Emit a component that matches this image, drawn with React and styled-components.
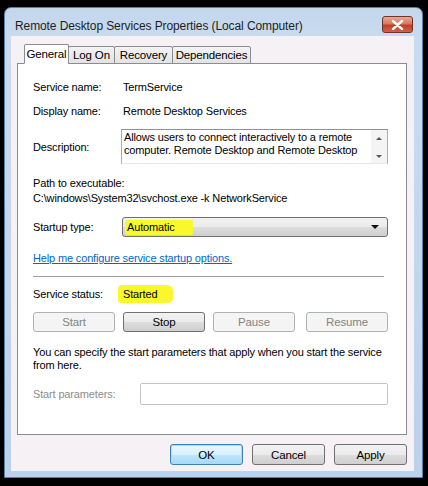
import React from 'react';
import styled, { createGlobalStyle } from 'styled-components';

const GlobalStyle = createGlobalStyle`
  html, body {
    margin: 0;
    padding: 0;
    background: #000;
  }
  body {
    font-family: "Liberation Sans", Arial, sans-serif;
    font-size: 11px;
    letter-spacing: -0.15px;
    color: #000;
  }
`;

const App = () => {
  return (
    <>
      <GlobalStyle />
      <Screen>
        <Window>
          <TitleBar>
            <Title>Remote Desktop Services Properties (Local Computer)</Title>
            <CloseButton>
              <svg width="13" height="10" viewBox="0 0 13 10">
                <path d="M2 1 L11 9 M11 1 L2 9" stroke="#fff" strokeWidth="2.4" strokeLinecap="round" />
              </svg>
            </CloseButton>
          </TitleBar>
          <Client>
            <Tabs>
              <Tab active w={45}>General</Tab>
              <Tab w={47}>Log On</Tab>
              <Tab w={59}>Recovery</Tab>
              <Tab w={79}>Dependencies</Tab>
            </Tabs>
            <Panel>
              <Row top={16}>
                <Label>Service name:</Label>
                <Value>TermService</Value>
              </Row>
              <Row top={10}>
                <Label>Display name:</Label>
                <Value>Remote Desktop Services</Value>
              </Row>
              <DescRow>
                <Label>Description:</Label>
                <DescBox>
                  <DescText>
                    Allows users to connect interactively to a remote computer. Remote Desktop and Remote Desktop
                  </DescText>
                  <ScrollBar>
                    <Arrow up />
                    <Arrow />
                  </ScrollBar>
                </DescBox>
              </DescRow>
              <Block top={13}>Path to executable:</Block>
              <Block top={3}>C:\windows\System32\svchost.exe -k NetworkService</Block>
              <Row top={13}>
                <Label>Startup type:</Label>
                <Select>
                  <Highlight>Automatic</Highlight>
                  <DropArrow />
                </Select>
              </Row>
              <Link href="#">Help me configure service startup options.</Link>
              <Separator />
              <Row top={8}>
                <Label shift={-5}>Service status:</Label>
                <StatusMark>Started</StatusMark>
              </Row>
              <ButtonRow>
                <Button disabled>Start</Button>
                <Button>Stop</Button>
                <Button disabled>Pause</Button>
                <Button disabled>Resume</Button>
              </ButtonRow>
              <Note>
                You can specify the start parameters that apply when you start the service from here.
              </Note>
              <ParamRow>
                <ParamLabel>Start parameters:</ParamLabel>
                <ParamInput />
              </ParamRow>
            </Panel>
            <Footer>
              <DialogButton primary>OK</DialogButton>
              <DialogButton>Cancel</DialogButton>
              <DialogButton>Apply</DialogButton>
            </Footer>
          </Client>
        </Window>
      </Screen>
    </>
  );
};

export default App;

const Screen = styled.div`
  width: 428px;
  height: 486px;
  padding: 7px 5px 8px 4px;
  box-sizing: border-box;
`;

const Window = styled.div`
  width: 419px;
  height: 471px;
  box-sizing: border-box;
  border: 1px solid #5b7fa6;
  border-radius: 7px 7px 0 0;
  background: linear-gradient(180deg, #c3d6ec 0%, #c9dbee 30px, #bcd2ea 100%);
  padding: 0 8px 6px 6px;
  display: flex;
  flex-direction: column;
`;

const TitleBar = styled.div`
  height: 28px;
  display: flex;
  align-items: flex-start;
  justify-content: space-between;
  padding: 0 1px 0 4px;
`;

const Title = styled.div`
  font-size: 12px;
  letter-spacing: -0.1px;
  color: #1e1e1e;
  margin-top: 11px;
`;

const CloseButton = styled.div`
  width: 31px;
  height: 17px;
  margin-top: 8px;
  box-sizing: border-box;
  border: 1px solid #6e3428;
  border-radius: 3px;
  background: linear-gradient(180deg, #e8a996 0%, #d9775f 45%, #c23e25 55%, #d0614a 100%);
  display: flex;
  align-items: center;
  justify-content: center;
`;

const Client = styled.div`
  flex: 1;
  background: #f5f1f5;
  padding: 7px 7px 0 6px;
  display: flex;
  flex-direction: column;
`;

const Tabs = styled.div`
  display: flex;
  align-items: flex-end;
  height: 20px;
  padding-left: 7px;
  position: relative;
  z-index: 1;
`;

const Tab = styled.div`
  width: ${p => p.w}px;
  height: ${p => (p.active ? '20px' : '18px')};
  box-sizing: border-box;
  border: 1px solid #898c95;
  border-bottom: ${p => (p.active ? '1px solid #fff' : '1px solid #898c95')};
  margin-left: ${p => (p.active ? '0' : '-1px')};
  border-radius: 2px 2px 0 0;
  background: ${p => (p.active ? '#fff' : 'linear-gradient(180deg, #f3f3f3, #e3e3e3)')};
  display: flex;
  align-items: center;
  justify-content: center;
  font-size: 11.5px;
  margin-bottom: -1px;
`;

const Panel = styled.div`
  height: 372px;
  box-sizing: border-box;
  border: 1px solid #898c95;
  background: #fff;
  padding: 0 18px 0 15px;
  display: flex;
  flex-direction: column;
`;

const Row = styled.div`
  display: flex;
  align-items: center;
  margin-top: ${p => p.top || 0}px;
  min-height: 14px;
`;

const Label = styled.div`
  width: ${p => 90 + (p.shift || 0)}px;
  flex-shrink: 0;
`;

const Value = styled.div``;

const DescRow = styled.div`
  display: flex;
  align-items: center;
  margin-top: 11px;
`;

const DescBox = styled.div`
  width: 267px;
  height: 35px;
  margin-left: -2px;
  box-sizing: border-box;
  border: 1px solid #abadb3;
  border-top-color: #8e9196;
  border-bottom-color: #e3e9ef;
  display: flex;
`;

const DescText = styled.div`
  flex: 1;
  padding: 1px 2px;
  line-height: 13px;
  overflow: hidden;
`;

const ScrollBar = styled.div`
  width: 16px;
  background: #f4f4f4;
  display: flex;
  flex-direction: column;
  justify-content: space-between;
  align-items: center;
  padding: 7px 0 5px;
`;

const Arrow = styled.div`
  width: 0;
  height: 0;
  border-left: 3px solid transparent;
  border-right: 3px solid transparent;
  ${p => (p.up ? 'border-bottom: 3px solid #555;' : 'border-top: 3px solid #555;')}
`;

const Block = styled.div`
  margin-top: ${p => p.top}px;
`;

const Select = styled.div`
  width: 267px;
  height: 20px;
  margin-left: -1px;
  box-sizing: border-box;
  border: 1px solid #707070;
  border-radius: 3px;
  background: linear-gradient(180deg, #f2f2f2 0%, #ebebeb 50%, #dddddd 51%, #cfcfcf 100%);
  display: flex;
  align-items: center;
  justify-content: space-between;
  padding: 0 8px 0 2px;
`;

const Highlight = styled.span`
  background: #f8f82a;
  padding: 1px 18px 2px 2px;
  border-radius: 2px;
`;

const DropArrow = styled.div`
  width: 0;
  height: 0;
  border-left: 4px solid transparent;
  border-right: 4px solid transparent;
  border-top: 4px solid #111;
`;

const Link = styled.a`
  color: #0066cc;
  margin-top: 15px;
  text-decoration: underline;
  width: max-content;
`;

const Separator = styled.div`
  height: 1px;
  background: #a0a0a0;
  margin-top: 12px;
  margin-right: 4px;
`;

const StatusMark = styled.span`
  background: #f8f82a;
  padding: 3px 16px 3px 5px;
  border-radius: 4px 6px 5px 3px;
`;

const ButtonRow = styled.div`
  display: flex;
  gap: 8px;
  margin-top: 9px;
`;

const Button = styled.div`
  width: 82px;
  height: 20px;
  box-sizing: border-box;
  border: 1px solid ${p => (p.disabled ? '#adb2b5' : '#707070')};
  border-radius: 3px;
  background: ${p => (p.disabled
    ? '#f4f4f4'
    : 'linear-gradient(180deg, #f2f2f2 0%, #ebebeb 50%, #dddddd 51%, #cfcfcf 100%)')};
  color: ${p => (p.disabled ? '#838383' : '#000')};
  display: flex;
  align-items: center;
  justify-content: center;
  font-size: 11.5px;
  &:last-child {
    margin-left: 3px;
  }
`;

const Note = styled.div`
  margin-top: 14px;
  line-height: 13px;
  margin-right: -4px;
`;

const ParamRow = styled.div`
  display: flex;
  align-items: center;
  margin-top: 11px;
`;

const ParamLabel = styled.div`
  width: 107px;
  color: #8d8d8d;
`;

const ParamInput = styled.div`
  width: 249px;
  height: 22px;
  box-sizing: border-box;
  border: 1px solid #c2c5ca;
  border-radius: 2px;
  background: #fff;
`;

const Footer = styled.div`
  display: flex;
  justify-content: flex-end;
  gap: 9px;
  margin-top: 9px;
`;

const DialogButton = styled.div`
  width: 73px;
  height: 21px;
  box-sizing: border-box;
  border: 1px solid ${p => (p.primary ? '#3c7fb1' : '#707070')};
  border-radius: 3px;
  background: ${p => (p.primary
    ? 'linear-gradient(180deg, #eaf6fd 0%, #d9f0fc 50%, #bee6fd 51%, #a7d9f5 100%)'
    : 'linear-gradient(180deg, #f2f2f2 0%, #ebebeb 50%, #dddddd 51%, #cfcfcf 100%)')};
  box-shadow: ${p => (p.primary ? 'inset 0 0 0 1px #a9dcf8' : 'none')};
  display: flex;
  align-items: center;
  justify-content: center;
  font-size: 11.5px;
`;
